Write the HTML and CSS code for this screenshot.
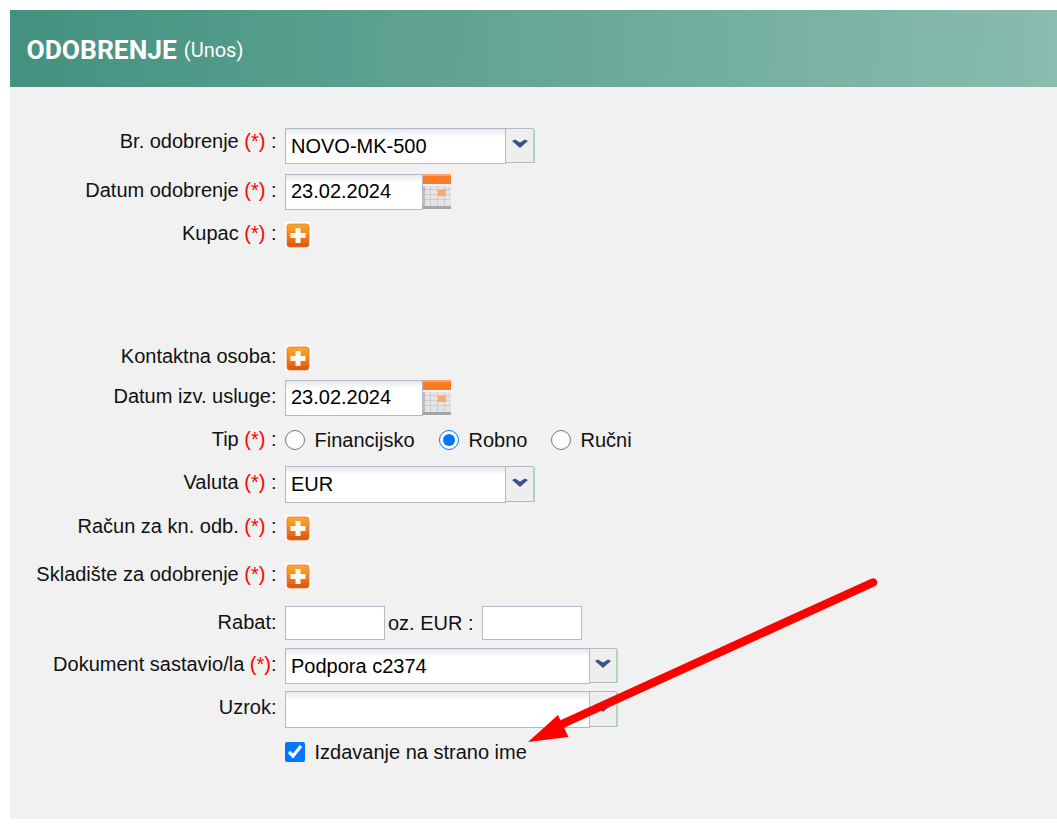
FILE: index.html
```html
<!DOCTYPE html>
<html lang="hr">
<head>
<meta charset="utf-8">
<title>Odobrenje</title>
<link rel="stylesheet" href="styles.css">
</head>
<body>
<svg class="defs" width="0" height="0" aria-hidden="true">
  <defs>
    <linearGradient id="plusBg" x1="0" y1="0" x2="0" y2="1">
      <stop offset="0" stop-color="#fca82a"/>
      <stop offset="0.5" stop-color="#f4841a"/>
      <stop offset="1" stop-color="#da4e0e"/>
    </linearGradient>
    <symbol id="plus" viewBox="0 0 26 26">
      <rect width="26" height="26" fill="#fff"/>
      <rect x="2" y="2" width="22" height="23" rx="2.5" fill="url(#plusBg)" stroke="#e0793a" stroke-width="0.8"/>
      <path d="M10.5 6h5v5h5v5h-5v5h-5v-5h-5v-5h5z" fill="#fff" fill-opacity="0.95"/>
    </symbol>
    <symbol id="cal" viewBox="0 0 28 35">
      <rect x="0" y="0" width="28" height="10" fill="#fb7a24"/>
      <rect x="0" y="0" width="28" height="2" fill="#f9a46a"/>
      <rect x="0" y="10" width="28" height="2" fill="#f4f4f4"/>
      <rect x="0" y="12" width="28" height="20" fill="#e4e4e4"/>
      <path d="M0 15.500h28M0 20.500h28M0 25.500h28M7.500 12v20M14.500 12v20M21.500 12v20" stroke="#cccccc" stroke-width="1"/>
      <rect x="15" y="16" width="8" height="6" fill="#fba86c"/>
      <rect x="0" y="32" width="28" height="3" fill="#a5a5a5"/>
      <rect x="0" y="12" width="2" height="20" fill="#bdbdbd"/>
    </symbol>
    <symbol id="chev" viewBox="0 0 16 10">
      <path d="M0 2L3 0.500L8 3.500L13 0.500L16 2L8 9Z" fill="#3a5488"/>
    </symbol>
  </defs>
</svg>
<main class="panel">
  <header class="head">
    <h1 class="title">ODOBRENJE</h1>
    <span class="mode">(Unos)</span>
  </header>
  <form class="form">
    <div class="row h36 first">
      <label class="lab lab-high">Br. odobrenje <em>(*)</em> :</label>
      <div class="combo"><span class="field w221">NOVO-MK-500</span><span class="btn btn30"><svg class="chev"><use href="#chev"/></svg></span></div>
    </div>
    <div class="row h36 m10">
      <label class="lab">Datum odobrenje <em>(*)</em> :</label>
      <div class="date"><span class="field w138">23.02.2024</span><svg class="cal"><use href="#cal"/></svg></div>
    </div>
    <div class="row h26 m12">
      <label class="lab">Kupac <em>(*)</em> :</label>
      <svg class="plus"><use href="#plus"/></svg>
    </div>
    <div class="row h26 m97">
      <label class="lab">Kontaktna osoba:</label>
      <svg class="plus"><use href="#plus"/></svg>
    </div>
    <div class="row h36 m9">
      <label class="lab">Datum izv. usluge:</label>
      <div class="date"><span class="field w138">23.02.2024</span><svg class="cal"><use href="#cal"/></svg></div>
    </div>
    <div class="row h20 m14">
      <label class="lab lab-low">Tip <em>(*)</em> :</label>
      <div class="choices">
        <label class="choice c1"><input type="radio" name="tip">Financijsko</label>
        <label class="choice c2"><input type="radio" name="tip" checked>Robno</label>
        <label class="choice"><input type="radio" name="tip">Ručni</label>
      </div>
    </div>
    <div class="row h37 m16">
      <label class="lab">Valuta <em>(*)</em> :</label>
      <div class="combo"><span class="field w221">EUR</span><span class="btn btn30"><svg class="chev"><use href="#chev"/></svg></span></div>
    </div>
    <div class="row h26 m12">
      <label class="lab">Račun za kn. odb. <em>(*)</em> :</label>
      <svg class="plus"><use href="#plus"/></svg>
    </div>
    <div class="row h26 m22">
      <label class="lab">Skladište za odobrenje <em>(*)</em> :</label>
      <svg class="plus"><use href="#plus"/></svg>
    </div>
    <div class="row h34 m17">
      <label class="lab lab-low">Rabat:</label>
      <div class="rabat"><span class="field w100"></span><span class="oz">oz. EUR :</span><span class="field w100"></span></div>
    </div>
    <div class="row h36 m8">
      <label class="lab">Dokument sastavio/la <em>(*)</em>:</label>
      <div class="combo"><span class="field w305">Podpora c2374</span><span class="btn"><svg class="chev"><use href="#chev"/></svg></span></div>
    </div>
    <div class="row h37 m7">
      <label class="lab">Uzrok:</label>
      <div class="combo"><span class="field w305"></span><span class="btn"><svg class="chev"><use href="#chev"/></svg></span></div>
    </div>
    <div class="row h20 m14">
      <span class="lab"></span>
      <label class="choice"><input type="checkbox" checked>Izdavanje na strano ime</label>
    </div>
  </form>
  <svg class="arrow" width="400" height="200" viewBox="0 0 400 200" aria-hidden="true">
    <path d="M373 22.500L60 165" stroke="#ff0000" stroke-width="8.500" stroke-linecap="round" fill="none"/>
    <path d="M58 155L28 182L68.500 177Z" fill="#ff0000"/>
  </svg>
</main>
</body>
</html>
```
FILE: styles.css
```css
* { box-sizing: border-box; }
html, body { margin: 0; padding: 0; background: #fff; }
body {
  padding: 10px 0 19px 10px;
  font-family: "Liberation Sans", Arial, sans-serif;
  font-size: 20px;
  color: #111;
}
.defs { position: absolute; }
.panel {
  position: relative;
  height: 809px;
  background: #f1f1f1;
  overflow: hidden;
}
.head {
  height: 77px;
  padding-left: 16.500px;
  padding-top: 2px;
  display: flex;
  align-items: center;
  gap: 7px;
  background: linear-gradient(92deg, #43917e 0%, #8abcb0 100%);
  color: #fff;
  font-family: Roboto, sans-serif;
}
.title { margin: 0; font-size: 26.4px; font-weight: 700; line-height: 28px; }
.mode { font-size: 20px; line-height: 28px; }
.form { display: flex; flex-direction: column; padding-top: 41px; }
.row { display: flex; align-items: center; gap: 8px; }
.lab {
  width: 267px;
  flex: none;
  text-align: right;
  padding: 0 0.5px 4px 0;
  white-space: nowrap;
}
.lab-high { padding-bottom: 10px; }
.lab-low { padding-bottom: 2px; }
.lab em { font-style: normal; color: #f00; }
.h20 { height: 20px; }
.h26 { height: 26px; }
.h34 { height: 34px; }
.h36 { height: 36px; }
.h37 { height: 37px; }
.m7 { margin-top: 7px; }
.m8 { margin-top: 8px; }
.m9 { margin-top: 9px; }
.m10 { margin-top: 10px; }
.m12 { margin-top: 12px; }
.m14 { margin-top: 14px; }
.m16 { margin-top: 16px; }
.m17 { margin-top: 17px; }
.m22 { margin-top: 22px; }
.m97 { margin-top: 97px; }
.field {
  display: flex;
  align-items: center;
  height: 100%;
  padding-left: 5px;
  font-size: 20px;
  color: #000;
  border: 1px solid #b5b8c8;
  background: linear-gradient(#e6e9ea 0, #fff 8px) #fff;
}
.date .field { padding-bottom: 2px; }
.w100 { width: 100px; background: #fff; }
.w138 { width: 138px; }
.w221 { width: 221px; }
.w305 { width: 305px; }
.combo, .date, .rabat { display: flex; height: 100%; }
.combo { align-items: flex-start; }
.btn {
  width: 29px;
  height: calc(100% - 1px);
  display: flex;
  align-items: center;
  justify-content: center;
  margin-left: -1px;
  padding-bottom: 3px;
  background: #eeeeef;
  border: 1px solid #b5b8c8;
  border-right: 2px solid #a9dab8;
  border-top-right-radius: 3px;
}
.btn30 { width: 30px; }
.chev { width: 16px; height: 10px; display: block; }
.date { align-items: flex-start; }
.cal { width: 28px; height: 35px; display: block; }
.plus { width: 26px; height: 26px; display: block; }
.rabat { align-items: center; }
.oz { padding: 0 8px 0 3px; font-size: 20px; white-space: nowrap; }
.choices { display: flex; }
.choice { display: flex; align-items: center; height: 20px; font-size: 20px; white-space: nowrap; color: #111; }
.choice input { width: 20px; height: 20px; margin: 0 9.5px 0 0; flex: none; }
.c1 { margin-right: 24.5px; }
.c2 { margin-right: 23.5px; }
.arrow { position: absolute; left: 490px; top: 550px; }
```
